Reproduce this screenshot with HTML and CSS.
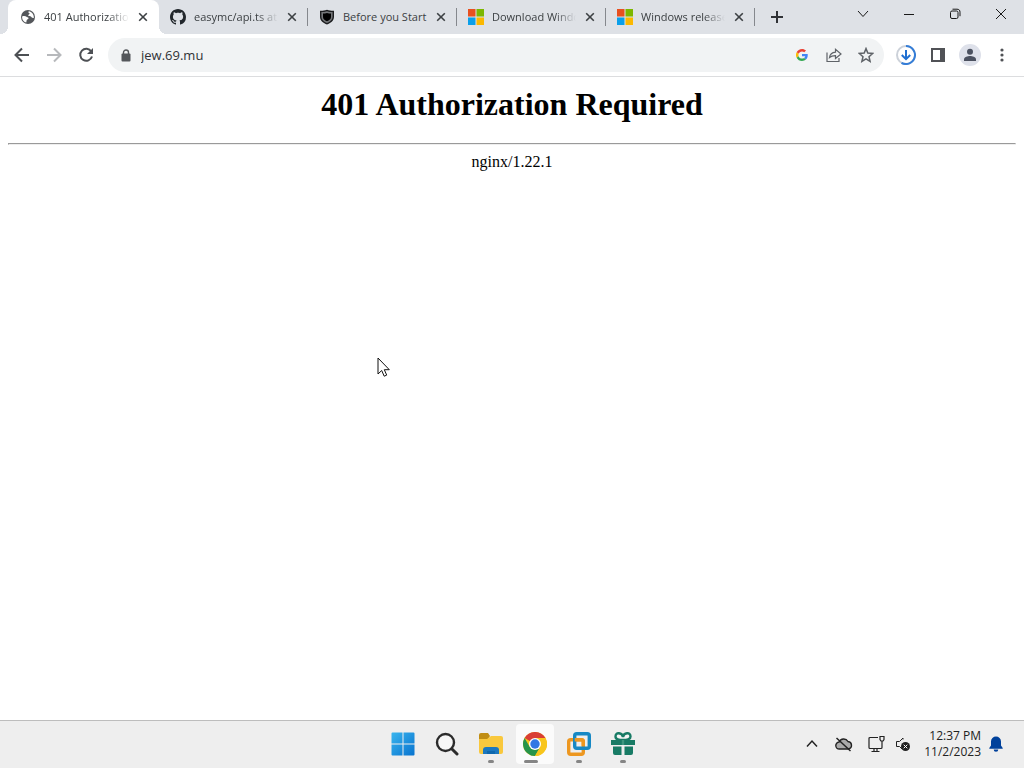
FILE: index.html
```html
<!DOCTYPE html>
<html lang="en">
<head>
    <meta charset="utf-8">
    <title>401 Authorization Required</title>
    <link rel="stylesheet" href="styles.css">
</head>
<body>
    <header class="browser">
        <div class="tabstrip">
            <div class="tabs">
                <div class="tab active">
                    <svg class="favicon" viewBox="0 0 16 16"><circle cx="8" cy="8" r="7" fill="#54575b"/><path d="M2.300 7.200c2-.6 3.500-.2 4.200.6.6.8 1.900.3 2 1.500.1 1.200-1.700 1-1.900 2.300l-.3 2C4 13 2.100 11 2.100 8.500zM8.800 2.300c-.9 1.100-.2 1.700.8 1.900.2 1.200-1.600 1.200-1.400 2.300.4 1 1.900.4 2.700 1.100.8.700 1.200 1.700 2.900 1.300.3-2.900-1.500-6-5-6.600z" fill="#fff"/></svg>
                    <span class="title">401 Authorization Required</span>
                    <button class="close" aria-label="Close tab"><svg viewBox="0 0 10 10"><path d="M1.200 1.200l7.600 7.600M8.800 1.200L1.200 8.800"/></svg></button>
                </div>
                <div class="tab">
                    <svg class="favicon" viewBox="0 0 16 16"><path fill="#22272c" d="M8 0C3.580 0 0 3.580 0 8c0 3.540 2.290 6.530 5.470 7.590.4.070.55-.17.55-.38 0-.19-.01-.82-.01-1.490-2.010.37-2.530-.49-2.690-.94-.09-.23-.48-.94-.82-1.130-.28-.15-.68-.52-.01-.53.63-.01 1.080.58 1.230.82.72 1.210 1.870.87 2.330.66.07-.52.28-.87.51-1.070-1.780-.2-3.640-.89-3.640-3.950 0-.87.31-1.590.82-2.150-.08-.2-.36-1.020.08-2.120 0 0 .67-.21 2.200.82.64-.18 1.320-.27 2-.27s1.360.09 2 .27c1.530-1.040 2.200-.82 2.200-.82.44 1.100.16 1.920.08 2.120.51.56.82 1.270.82 2.150 0 3.070-1.870 3.750-3.650 3.950.29.25.54.73.54 1.480 0 1.070-.01 1.930-.01 2.200 0 .21.15.46.55.38A8.010 8.010 0 0016 8c0-4.420-3.580-8-8-8z"/></svg>
                    <span class="title">easymc/api.ts at main</span>
                    <button class="close" aria-label="Close tab"><svg viewBox="0 0 10 10"><path d="M1.200 1.200l7.600 7.600M8.800 1.200L1.200 8.800"/></svg></button>
                </div>
                <div class="tab">
                    <svg class="favicon" viewBox="0 0 16 16"><path d="M8 .8c2.500.9 4.700 1.100 7 1v6c0 4-3.500 6.500-7 7.700-3.500-1.200-7-3.700-7-7.700v-6c2.300.1 4.500-.1 7-1z" fill="#1c1d1f"/><path d="M8 2.200c2 .7 3.800.9 5.600.9v4.700c0 3.100-2.600 5-5.600 6.200-3-1.200-5.600-3.100-5.600-6.200V3.100c1.800 0 3.600-.2 5.600-.9z" fill="#747679"/><path d="M8 4c1.500.4 2.700.6 4 .6v3.300c0 2.100-1.700 3.400-4 4.400-2.300-1-4-2.300-4-4.400V4.600c1.300 0 2.500-.2 4-.6z" fill="#000"/></svg>
                    <span class="title full">Before you Start</span>
                    <button class="close" aria-label="Close tab"><svg viewBox="0 0 10 10"><path d="M1.200 1.200l7.600 7.600M8.800 1.200L1.200 8.800"/></svg></button>
                </div>
                <div class="tab">
                    <svg class="favicon" viewBox="0 0 16 16"><path fill="#e8501f" d="M0 0h7.500v7.500H0z"/><path fill="#7db700" d="M8.500 0H16v7.500H8.500z"/><path fill="#0a9fea" d="M0 8.500h7.500V16H0z"/><path fill="#fbb800" d="M8.500 8.500H16V16H8.500z"/></svg>
                    <span class="title">Download Windows 11</span>
                    <button class="close" aria-label="Close tab"><svg viewBox="0 0 10 10"><path d="M1.200 1.200l7.600 7.600M8.800 1.200L1.200 8.800"/></svg></button>
                </div>
                <div class="tab">
                    <svg class="favicon" viewBox="0 0 16 16"><path fill="#e8501f" d="M0 0h7.500v7.500H0z"/><path fill="#7db700" d="M8.500 0H16v7.500H8.500z"/><path fill="#0a9fea" d="M0 8.500h7.500V16H0z"/><path fill="#fbb800" d="M8.500 8.500H16V16H8.500z"/></svg>
                    <span class="title">Windows release health</span>
                    <button class="close" aria-label="Close tab"><svg viewBox="0 0 10 10"><path d="M1.200 1.200l7.600 7.600M8.800 1.200L1.200 8.800"/></svg></button>
                </div>
            </div>
            <button class="new-tab" aria-label="New tab"><svg width="12" height="12" viewBox="0 0 12 12"><path d="M6 0v12M0 6h12" stroke="#303236" stroke-width="2"/></svg></button>
            <div class="window-buttons">
                <button aria-label="Search tabs"><svg width="12" height="12" viewBox="0 0 12 12"><path d="M1 3l5 5.500L11 3"/></svg></button>
                <button aria-label="Minimize"><svg width="12" height="12" viewBox="0 0 12 12"><path d="M1 6.500h10"/></svg></button>
                <button aria-label="Restore"><svg width="12" height="12" viewBox="0 0 12 12"><rect x="1.500" y="3" width="7.500" height="7.500" rx="1.500"/><path d="M3.500 1.200h4.500c2 0 3 1 3 3v4"/></svg></button>
                <button aria-label="Close"><svg width="12" height="12" viewBox="0 0 12 12"><path d="M1 1l10 10M11 1L1 11"/></svg></button>
            </div>
        </div>

        <div class="toolbar">
            <button class="nav" aria-label="Back"><svg viewBox="0 0 16 16"><path d="M15 8H2M8 1.500L1.500 8 8 14.500" fill="none" stroke="#4d5054" stroke-width="2"/></svg></button>
            <button class="nav" aria-label="Forward"><svg viewBox="0 0 16 16"><path d="M1 8h13M8 1.500L14.500 8 8 14.500" fill="none" stroke="#b7b9bc" stroke-width="2"/></svg></button>
            <button class="nav" aria-label="Reload"><svg viewBox="0 0 16 16"><path d="M13.300 4.500A6 6 0 1 0 14 9.500" fill="none" stroke="#4d5054" stroke-width="2"/><path d="M15 1v6H9z" fill="#4d5054"/></svg></button>
            <div class="omnibox">
                <svg width="10" height="13" viewBox="0 0 10 13"><path d="M2.500 5V3.500a2.500 2.500 0 0 1 5 0V5" fill="none" stroke="#54575b" stroke-width="1.400"/><rect x="0.500" y="4.500" width="9" height="8" rx="1" fill="#54575b"/></svg>
                <input type="text" value="jew.69.mu" aria-label="Address">
                <button aria-label="Google"><svg viewBox="0 0 48 48" class="google"><path fill="#ea4335" d="M24 9.500c3.540 0 6.710 1.220 9.210 3.600l6.850-6.850C35.900 2.380 30.470 0 24 0 14.620 0 6.510 5.380 2.560 13.220l7.980 6.190C12.430 13.720 17.740 9.500 24 9.500z"/><path fill="#4285f4" d="M46.980 24.550c0-1.570-.15-3.090-.38-4.550H24v9.020h12.940c-.58 2.960-2.260 5.480-4.780 7.180l7.730 6c4.510-4.180 7.090-10.360 7.090-17.650z"/><path fill="#fbbc05" d="M10.530 28.590a14.500 14.500 0 0 1 0-9.180l-7.980-6.190a24 24 0 0 0 0 21.560l7.980-6.190z"/><path fill="#34a853" d="M24 48c6.480 0 11.930-2.130 15.890-5.810l-7.730-6c-2.150 1.450-4.920 2.300-8.160 2.300-6.260 0-11.570-4.220-13.470-9.910l-7.980 6.190C6.510 42.620 14.620 48 24 48z"/></svg></button>
                <button aria-label="Share this page"><svg viewBox="0 0 16 16" class="line"><path d="M1 5.500v9h12V11"/><path d="M3.500 10.500c.5-3.500 2.700-5 6-5.300V2.200L15 7l-5.500 4.500V8.700c-2.500 0-4.500.4-6 1.800z"/></svg></button>
                <button aria-label="Bookmark this tab"><svg viewBox="0 0 16 16" class="line star"><path d="M8 1.600l1.800 4.500 4.900.4-3.700 3.200 1.100 4.700L8 11.900l-4.100 2.500L5 9.700 1.300 6.500l4.900-.4z"/></svg></button>
            </div>
            <div class="actions">
                <button aria-label="Downloads"><svg width="20" height="20" viewBox="0 0 20 20" fill="none"><circle cx="10" cy="10" r="9" stroke="#ccd1d9" stroke-width="2"/><path d="M10 1a9 9 0 1 1-4.500 16.800" stroke="#347dd7" stroke-width="2"/><path d="M10 5v9M5.800 10l4.200 4.200 4.200-4.200" stroke="#1f6fd1" stroke-width="2"/></svg></button>
                <button aria-label="Side panel"><svg width="14" height="14" viewBox="0 0 14 14"><rect x="1" y="1" width="12" height="12" fill="#fff" stroke="#505256" stroke-width="2"/><path d="M9 1h4v12H9z" fill="#505256"/></svg></button>
                <button aria-label="Profile"><svg width="22" height="22" viewBox="0 0 22 22"><circle cx="11" cy="11" r="11" fill="#dee1ea"/><circle cx="11" cy="7.800" r="3" fill="#4b5160"/><path d="M5 17v-1.800c0-2.200 3.800-3.300 6-3.300s6 1.100 6 3.300V17z" fill="#4b5160"/></svg></button>
                <button aria-label="Menu"><svg width="4" height="14" viewBox="0 0 4 14" fill="#505256"><circle cx="2" cy="2" r="1.600"/><circle cx="2" cy="7" r="1.600"/><circle cx="2" cy="12" r="1.600"/></svg></button>
            </div>
        </div>
    </header>

    <main class="page">
        <h1>401 Authorization Required</h1>
        <hr>
        <div class="server">nginx/1.22.1</div>
    </main>

    <footer class="taskbar">
        <div class="apps">
            <button class="app" aria-label="Start"><svg viewBox="0 0 24 24"><defs><linearGradient id="win" x1="0" y1="0" x2="1" y2="1"><stop offset="0" stop-color="#39b5ee"/><stop offset="1" stop-color="#0873cf"/></linearGradient></defs><path fill="url(#win)" d="M1.500.5h10v11h-11v-10a1 1 0 0 1 1-1zM12.500.5h10a1 1 0 0 1 1 1v10h-11zM.5 12.500h11v11h-10a1 1 0 0 1-1-1zM12.500 12.500h11v10a1 1 0 0 1-1 1h-10z"/></svg></button>
            <button class="app" aria-label="Search"><svg viewBox="0 0 24 24"><circle cx="10.500" cy="10.500" r="8.500" fill="#f7f7f7" stroke="#2b2b2b" stroke-width="2.400"/><path d="M16.700 16.700l5.300 5.300" stroke="#2b2b2b" stroke-width="3" stroke-linecap="round"/></svg></button>
            <button class="app open" aria-label="File Explorer"><svg viewBox="0 0 24 24"><path d="M0 3a2 2 0 0 1 2-2h7l2 3-2 3H0z" fill="#c08d14"/><path d="M0 7h8l4-3h10a2 2 0 0 1 2 2v14a2 2 0 0 1-2 2H2a2 2 0 0 1-2-2z" fill="#f9c83d"/><path d="M4 22v-4a3 3 0 0 1 3-3h10a3 3 0 0 1 3 3v4z" fill="#1c78bf"/><path d="M8 19h8v3H8z" fill="#0f68ae"/></svg></button>
            <button class="app open current" aria-label="Google Chrome"><svg viewBox="0 0 24 24"><circle cx="12" cy="12" r="12" fill="#f8c51c"/><path d="M12 12L1.600 6A12 12 0 0 1 22.400 6z" fill="#d93e35"/><path d="M1.600 6l5.200 9 5.200 3-3 5.600A12 12 0 0 1 1.600 6z" fill="#27944a"/><path d="M6.800 15L12 18l5.200-3-5.200 9a12 12 0 0 1-5-1.100z" fill="#27944a"/><path d="M12 6h10.400A12 12 0 0 1 12 24l5.200-9z" fill="#f8c51c"/><circle cx="12" cy="12" r="6" fill="#fff"/><circle cx="12" cy="12" r="4.700" fill="#3278e4"/></svg></button>
            <button class="app open" aria-label="VMware Workstation"><svg viewBox="0 0 24 24" fill="none" stroke-width="3.400"><rect x="1.700" y="7.700" width="14.600" height="14.600" rx="2" stroke="#ed9720"/><rect x="7.700" y="1.700" width="14.600" height="14.600" rx="2" stroke="#1688c4"/><path d="M7.700 7.700h6.600a2 2 0 0 1 2 2v4" stroke="#ed9720"/></svg></button>
            <button class="app open" aria-label="Gift"><svg viewBox="0 0 24 24"><path d="M0 8h24v5H0zM2 14.500h8.500V23H4a2 2 0 0 1-2-2zM13.500 14.500H22V21a2 2 0 0 1-2 2h-6.500z" fill="#187b65"/><path d="M12 8C9 8 4.500 8 4.500 4.500 4.500 0 11 0 12 5c1-5 7.500-5 7.500-.5C19.500 8 15 8 12 8z" fill="#f4f4f4" stroke="#187b65" stroke-width="2.400"/><path d="M10.800 8h2.400v5h-2.400z" fill="#3f967f"/></svg></button>
        </div>
        <div class="tray">
            <button aria-label="Show hidden icons"><svg width="12" height="12" viewBox="0 0 12 12"><path d="M1 8.500l5-5.500 5 5.500" stroke-width="1.500"/></svg></button>
            <button class="cloud" aria-label="OneDrive"><svg width="18" height="16" viewBox="0 0 18 16"><path d="M4.500 13a3.500 3.500 0 0 1-.4-7A5 5 0 0 1 13 5.500a3.800 3.800 0 0 1 .5 7.500z" fill="#aaa" stroke-width="1.400"/><path d="M1.500 2l14 13" stroke-width="1.500"/></svg></button>
            <button class="network" aria-label="Network"><svg width="18" height="18" viewBox="0 0 18 18"><path d="M11 2.500H3a1 1 0 0 0-1 1v9a1 1 0 0 0 1 1h11a1 1 0 0 0 1-1V8M7 13.500v3M10 13.500v3M4.500 16.500h8M15 6v3M13 1.500h4v3l-1 1.500h-2l-1-1.500z" stroke-width="1.200"/></svg></button>
            <button aria-label="Volume muted"><svg width="16" height="16" viewBox="0 0 16 16"><path d="M8 3.500V2L4.500 5.500h-3v5h3L7 13"/><circle cx="10.500" cy="10.500" r="4.500" fill="#222" stroke="none"/><path d="M8.700 8.700l3.600 3.600M12.300 8.700l-3.600 3.600" stroke="#fff"/></svg></button>
            <div class="clock"><div>12:37 PM</div><div>11/2/2023</div></div>
            <button aria-label="Notifications"><svg width="14" height="16" viewBox="0 0 14 16"><path d="M7 .5a5 5 0 0 1 5 5v4l1.700 2.500v.8H.3V12L2 9.500v-4a5 5 0 0 1 5-5zM4.700 13.500h4.600a2.300 2.300 0 0 1-4.600 0z" fill="#00419b" stroke="none"/></svg></button>
        </div>
    </footer>

    <svg class="cursor" width="14" height="22" viewBox="0 0 14 22"><path d="M1 1v16l3.700-3.500 2.500 5.700 2.500-1.100-2.400-5.400h5z" fill="#fff" stroke="#111"/></svg>
</body>
</html>
```

FILE: styles.css
```css
* { box-sizing: border-box; }
body { margin: 0; min-height: 100vh; display: flex; flex-direction: column; background: #fff; font-family: "Segoe UI", "Open Sans", sans-serif; font-size: 12px; color: #3c4043; }
button { display: flex; align-items: center; justify-content: center; padding: 0; border: none; background: none; }
svg { display: block; flex: none; }

/* tabs */
.tabstrip { display: flex; height: 34px; padding-left: 8px; background: #dee1e6; }
.tabs { display: flex; min-width: 0; }
.tab { position: relative; display: flex; align-items: center; width: 149px; padding: 0 10px 0 11px; }
.tab::after { content: ""; position: absolute; right: 0; top: 8px; width: 1px; height: 18px; background: #85888d; }
.tab.active { width: 151px; padding-left: 12px; background: #fff; border-radius: 8px 8px 0 0; }
.tab.active::before, .tab.active::after { content: ""; position: absolute; top: auto; bottom: 0; width: 8px; height: 8px; }
.tab.active::before { left: -8px; background: radial-gradient(circle at 0 0, transparent 8px, #fff 8px); }
.tab.active::after { right: -8px; background: radial-gradient(circle at 100% 0, transparent 8px, #fff 8px); }
.favicon { width: 16px; height: 16px; }
.title { flex: 1; min-width: 0; margin: 0 8px; font-size: 11px; line-height: 16px; white-space: nowrap; overflow: hidden; -webkit-mask-image: linear-gradient(to right, #000 75%, transparent); mask-image: linear-gradient(to right, #000 75%, transparent); }
.title.full { margin-right: 0; -webkit-mask-image: none; mask-image: none; }
.close { width: 12px; height: 16px; }
.close svg { width: 10px; height: 10px; stroke: #3c4043; stroke-width: 1.6; }
.new-tab { width: 28px; margin-left: 8px; }
.window-buttons { display: flex; height: 28px; margin-left: auto; }
.window-buttons button { width: 46px; }
.window-buttons svg { fill: none; stroke: #191919; }

/* toolbar */
.toolbar { display: flex; align-items: center; height: 43px; padding: 0 6px; border-bottom: 1px solid #dcdddf; background: #fff; }
.nav { width: 32px; height: 32px; }
.nav svg { width: 16px; height: 16px; }
.omnibox { display: flex; flex: 1; align-items: center; min-width: 0; height: 34px; margin-left: 6px; padding: 0 2px 0 13px; border-radius: 17px; background: #f1f3f4; }
.omnibox input { flex: 1; min-width: 0; margin-left: 10px; padding: 0; border: none; outline: none; background: none; font: inherit; font-size: 13px; color: #303236; }
.omnibox button { width: 32px; height: 32px; }
.omnibox button svg { width: 16px; height: 16px; }
.omnibox button .google { width: 12px; height: 12px; }
.line { fill: none; stroke: #5f6368; stroke-width: 1.2; }
.star { stroke-width: 1.5; }
.actions { display: flex; margin-left: 6px; }
.actions button { width: 32px; height: 32px; }

/* error page */
.page { flex: 1; padding: 8px; font-family: "Times New Roman", "Liberation Serif", serif; font-size: 16px; color: #000; text-align: center; }
.page h1 { margin: 0 0 20px; font-size: 32px; line-height: 38px; }
.page hr { margin: 8px 0; }

/* taskbar */
.taskbar { display: grid; grid-template-columns: 1fr auto 1fr; height: 48px; border-top: 1px solid #bdbdbd; background: #eeeeee; }
.apps { display: flex; grid-column: 2; align-items: center; padding: 0 0 2px 2px; }
.app { position: relative; width: 44px; height: 40px; }
.app svg { width: 24px; height: 24px; }
.app.current::before { content: ""; position: absolute; inset: 0 3px; border-radius: 4px; background: #fbfbfb; }
.app.current svg { position: relative; }
.app.open::after { content: ""; position: absolute; bottom: 1px; left: 50%; width: 6px; height: 3px; margin-left: -3px; border-radius: 2px; background: #858585; }
.app.current::after { width: 14px; margin-left: -11px; }
.tray { display: flex; align-items: center; justify-content: flex-end; padding: 0 21px 2px 0; }
.tray button { width: 24px; height: 32px; }
.tray svg { fill: none; stroke: #222; }
.tray .cloud { width: 34px; margin-left: 3px; }
.tray .network { width: 30px; }
.clock { width: 66px; line-height: 16px; color: #222; text-align: right; }
.clock + button { width: 14px; margin-left: 8px; }
.cursor { position: absolute; left: 377px; top: 357px; }
```
